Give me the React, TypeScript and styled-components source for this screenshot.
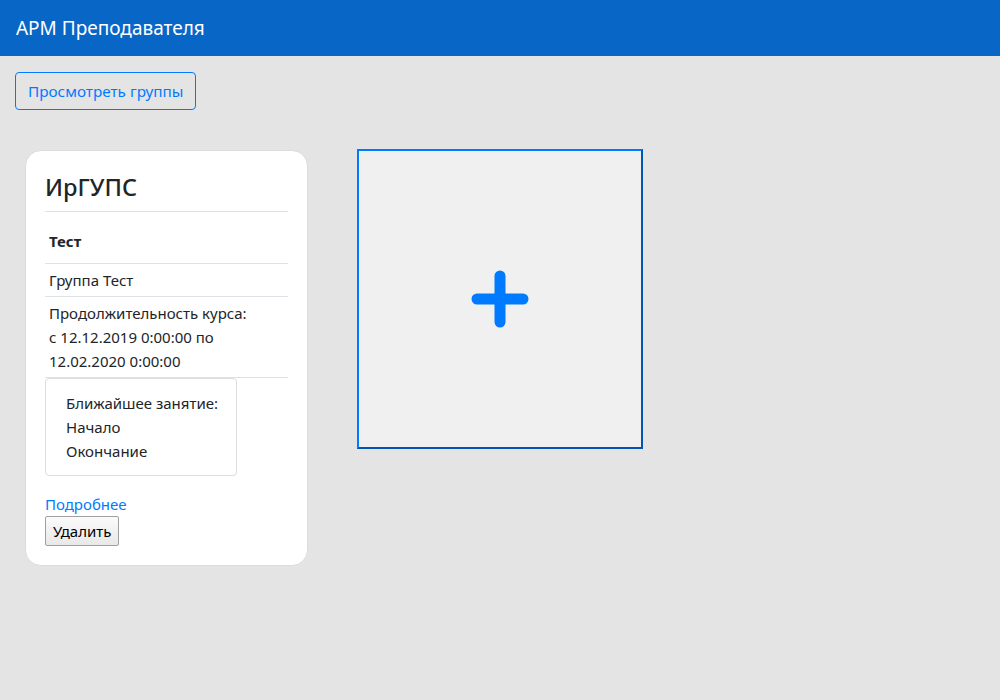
import React from 'react';
import styled, { createGlobalStyle } from 'styled-components';

const GlobalStyle = createGlobalStyle`
  html, body {
    margin: 0;
    padding: 0;
    background: #e4e4e4;
    font-family: "Noto Sans", "Open Sans", sans-serif;
    color: #212529;
  }
  * {
    box-sizing: border-box;
  }
`;

const TopBar = styled.header`
  height: 56px;
  background: #0866c6;
  display: flex;
  align-items: center;
  padding: 0 16px;
`;

const Brand = styled.div`
  color: #ffffff;
  font-size: 19px;
  line-height: 1;
`;

const Main = styled.main`
  padding: 16px 15px;
`;

const OutlineButton = styled.button`
  font-family: inherit;
  font-size: 15.3px;
  color: #007bff;
  background: transparent;
  border: 1px solid #007bff;
  border-radius: 4px;
  height: 38px;
  padding: 0 12px;
  cursor: pointer;
`;

const Cards = styled.div`
  display: flex;
  align-items: flex-start;
  gap: 49px;
  margin-top: 40px;
  padding-left: 10px;
`;

const Card = styled.section`
  width: 283px;
  background: #ffffff;
  border: 1px solid #dcdcdc;
  border-radius: 16px;
  padding: 20px 19px 19px 19px;
`;

const CardTitle = styled.h2`
  margin: 0;
  font-size: 23.5px;
  font-weight: 500;
  line-height: 32px;
  padding-bottom: 8px;
  border-bottom: 1px solid #dee2e6;
`;

const InfoTable = styled.div`
  display: flex;
  flex-direction: column;
`;

const InfoRow = styled.div<{ $head?: boolean }>`
  padding: ${(p) => (p.$head ? '17px 4px 10px' : '4px 4px')};
  font-size: 15px;
  line-height: 24px;
  font-weight: ${(p) => (p.$head ? 700 : 400)};
  border-bottom: 1px solid #dee2e6;
`;

const LessonBox = styled.div`
  width: 192px;
  border: 1px solid #dddddd;
  border-radius: 4px;
  padding: 12px 8px 12px 20px;
  font-size: 15px;
  line-height: 24px;
  white-space: nowrap;
`;

const DetailsLink = styled.a`
  display: block;
  margin-top: 18px;
  color: #007bff;
  font-size: 15px;
  line-height: 20px;
  text-decoration: none;
`;

const PlainButton = styled.button`
  font-family: inherit;
  font-size: 15px;
  color: #000;
  height: 30px;
  padding: 0 7px;
  margin-top: 2px;
  border: 1px solid #a0a0a0;
  border-radius: 2px;
  background: linear-gradient(#fbfbfb, #e8e8e8);
`;

const AddTile = styled.button`
  width: 286px;
  height: 300px;
  margin-top: -1px;
  background: #f0f0f0;
  border: 2px solid;
  border-color: #007bff #0055b0 #0055b0 #007bff;
  display: flex;
  align-items: center;
  justify-content: center;
  padding: 0;
  cursor: pointer;
`;

const PlusIcon = () => (
  <svg width="58" height="58" viewBox="0 0 58 58">
    <path d="M29 6 V52 M6 29 H52" stroke="#007bff" strokeWidth="11" strokeLinecap="round" />
  </svg>
);

const App: React.FC = () => {
  return (
    <>
      <GlobalStyle />
      <TopBar>
        <Brand>АРМ Преподавателя</Brand>
      </TopBar>
      <Main>
        <OutlineButton>Просмотреть группы</OutlineButton>
        <Cards>
          <Card>
            <CardTitle>ИрГУПС</CardTitle>
            <InfoTable>
              <InfoRow $head>Тест</InfoRow>
              <InfoRow>Группа Тест</InfoRow>
              <InfoRow>
                Продолжительность курса:
                <br />с 12.12.2019 0:00:00 по
                <br />
                12.02.2020 0:00:00
              </InfoRow>
            </InfoTable>
            <LessonBox>
              Ближайшее занятие:
              <br />
              Начало
              <br />
              Окончание
            </LessonBox>
            <DetailsLink href="#">Подробнее</DetailsLink>
            <PlainButton>Удалить</PlainButton>
          </Card>
          <AddTile aria-label="Добавить">
            <PlusIcon />
          </AddTile>
        </Cards>
      </Main>
    </>
  );
};

export default App;
